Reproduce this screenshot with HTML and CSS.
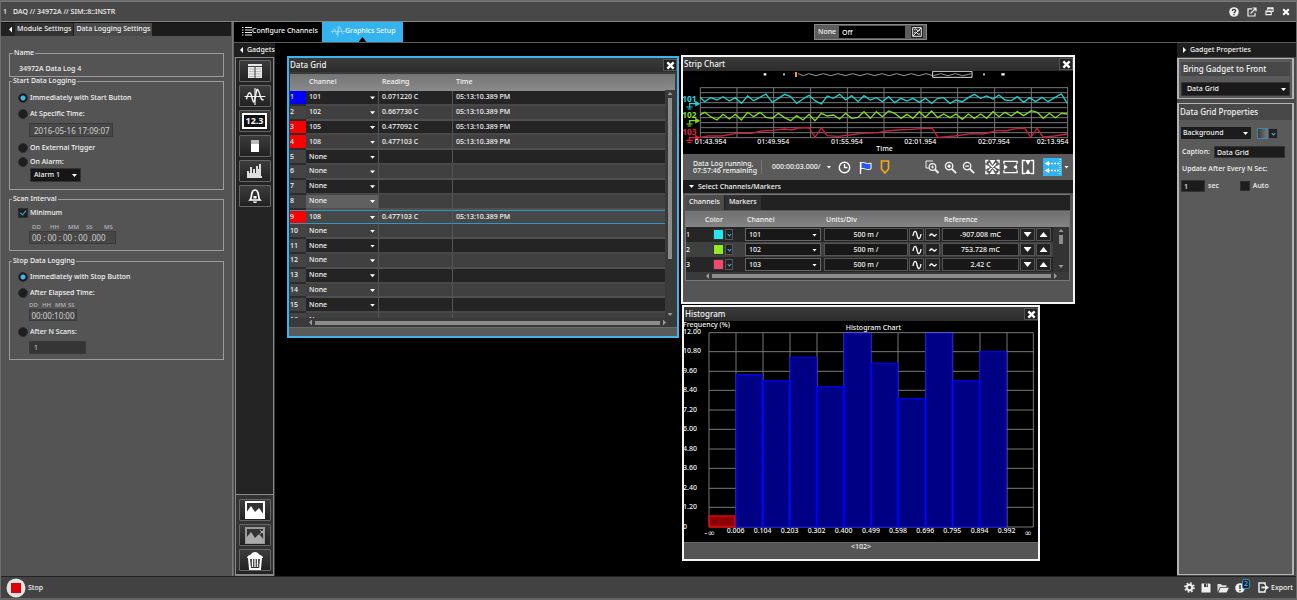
FILE: index.html
```html
<!DOCTYPE html>
<html lang="en">
<head>
<meta charset="utf-8">
<title>DAQ // 34972A</title>
<link rel="stylesheet" href="styles.css">
</head>
<body>
<svg class="defs" width="0" height="0" aria-hidden="true">
  <symbol id="i-x" viewBox="0 0 10 10"><path d="M1.5 1.5 8.5 8.5M8.5 1.5 1.5 8.5" stroke="#fff" stroke-width="2.6" fill="none"/></symbol>
  <symbol id="i-wave" viewBox="0 0 22 20"><path d="M0 10h22M11 1v18" stroke="currentColor" stroke-width="1.200" fill="none"/><path d="M2 13C4 5 6 4 7.500 10S10 19 11.500 10 13 1 15 5 17 15 20 13" stroke="currentColor" stroke-width="1.500" fill="none"/></symbol>
  <symbol id="i-mag" viewBox="0 0 14 14"><circle cx="5.500" cy="5.500" r="4" stroke="#f4f4f4" stroke-width="1.400" fill="none"/><path d="M8.500 8.500 13 13" stroke="#f4f4f4" stroke-width="2"/></symbol>
  <symbol id="i-sine" viewBox="0 0 10 10"><path d="M1 6C2 0 4 0 5 5S8 10 9 4" stroke="#fff" stroke-width="1.300" fill="none"/></symbol>
  <symbol id="i-tilde" viewBox="0 0 10 10"><path d="M1.500 6C3 3 4 4 5 5S7 7 8.500 4" stroke="#fff" stroke-width="1.300" fill="none"/></symbol>
</svg>

<div class="app">
  <header class="titlebar">
    <span>1</span>
    <h1 class="title">DAQ // 34972A // SIM::8::INSTR</h1>
    <div class="window-actions">
      <button class="plain" aria-label="Help"><svg width="10" height="10" viewBox="0 0 10 10"><circle cx="5" cy="5" r="4.800" fill="#eee"/><path d="M3.300 4C3.300 1.800 6.700 1.800 6.600 3.800 6.600 5 5 4.900 5 6.300M5 7v1.200" stroke="#333" stroke-width="1.200" fill="none"/></svg></button>
      <button class="plain" aria-label="Pop out"><svg width="10" height="10" viewBox="0 0 10 10"><path d="M5 1.800H1v7.200h7V6M3.500 6.500 8.500 1.500M5.500 1H9v3.500" stroke="#eee" stroke-width="1.200" fill="none"/></svg></button>
      <button class="plain" aria-label="Restore"><svg width="9" height="9" viewBox="0 0 10 10"><path d="M3 3.500V1h6v4H7M3 1.800h6" stroke="#eee" stroke-width="1.200" fill="none"/><path d="M1 4.500h6V8.500H1zM1 5.300h6" stroke="#eee" stroke-width="1.200" fill="none"/></svg></button>
      <button class="plain" aria-label="Close"><svg width="8" height="8"><use href="#i-x"/></svg></button>
    </div>
  </header>

  <main class="main">
    <aside class="settings">
      <nav class="side-tabs">
        <button class="side-tab back" aria-label="Collapse"><i class="tri left"></i></button>
        <button class="side-tab">Module Settings</button>
        <button class="side-tab active">Data Logging Settings</button>
      </nav>
      <form class="side-body">
        <fieldset class="group name-group">
          <legend>Name</legend>
          <input class="name-input" aria-label="Name" value="34972A Data Log 4">
        </fieldset>

        <fieldset class="group">
          <legend>Start Data Logging</legend>
          <label class="option"><input type="radio" name="start" checked>Immediately with Start Button</label>
          <label class="option gap"><input type="radio" name="start">At Specific Time:</label>
          <input class="field date" aria-label="Start time" value="2016-05-16 17:09:07">
          <label class="option gap"><input type="radio" name="start">On External Trigger</label>
          <label class="option tight"><input type="radio" name="start">On Alarm:</label>
          <span class="pick alarm"><select aria-label="Alarm"><option>Alarm 1</option></select></span>
        </fieldset>

        <fieldset class="group spaced">
          <legend>Scan Interval</legend>
          <label class="option"><input type="checkbox" checked>Minimum</label>
          <div class="units wide"><span>DD</span><span>HH</span><span>MM</span><span>SS</span><span>MS</span></div>
          <input class="field interval" aria-label="Scan interval" value="00 : 00 : 00 : 00 .000">
        </fieldset>

        <fieldset class="group stop-group">
          <legend>Stop Data Logging</legend>
          <label class="option"><input type="radio" name="stop" checked>Immediately with Stop Button</label>
          <label class="option gap"><input type="radio" name="stop">After Elapsed Time:</label>
          <div class="units narrow"><span>DD</span><span>HH</span><span>MM</span><span>SS</span></div>
          <input class="field elapsed" aria-label="Elapsed time" value="00:00:10:00">
          <label class="option gap"><input type="radio" name="stop">After N Scans:</label>
          <input class="field scans" aria-label="Number of scans" value="1">
        </fieldset>
      </form>
    </aside>

    <section class="center">
      <nav class="mode-bar">
        <button class="mode"><svg width="10" height="10" viewBox="0 0 10 10"><path d="M0 1.500h1.500M0 4h1.500M0 6.500h1.500M0 9h1.500M3 1.500h7M3 4h7M3 6.500h7M3 9h7" stroke="#eee" stroke-width="1.200"/></svg>Configure Channels</button>
        <button class="mode active"><svg class="pale" width="14" height="13"><use href="#i-wave"/></svg>Graphics Setup</button>
        <div class="status">
          <label for="off">None</label>
          <input id="off" value="Off">
          <button class="status-btn" aria-label="Picker"><svg width="10" height="10" viewBox="0 0 10 10"><path d="M.7.7h8.600v8.600H.7z" stroke="#eee" fill="none"/><path d="M1 9 9 1M2 3q2-2 3 0t3 0M2 6q2-2 3 0t3 1" stroke="#eee" fill="none"/></svg></button>
        </div>
      </nav>

      <div class="bench">
        <div class="gadgets">
          <button class="strip-head"><i class="tri left"></i>Gadgets</button>
          <div class="rail">
            <div class="rail-group">
              <button class="tool" aria-label="Data grid"><svg width="16" height="16" viewBox="0 0 16 16"><path d="M1 1h14v14H1z" fill="#e8e8e8"/><path d="M1 3.500h14" stroke="#444"/><path d="M2 6h12M2 8.500h12M2 11h12M2 13.500h12" stroke="#aaa" stroke-width=".7"/><path d="M8 4V15" stroke="#555" stroke-width="1.200"/></svg></button>
              <button class="tool" aria-label="Strip chart"><svg width="22" height="19"><use href="#i-wave"/></svg></button>
              <button class="tool" aria-label="Number"><span class="digits">12.3</span></button>
              <button class="tool" aria-label="Bar meter"><svg width="10" height="14" viewBox="0 0 10 14"><path d="M1 1h8v4H1z" fill="#bbb"/><path d="M1 5h8v8H1z" fill="#fff"/></svg></button>
              <button class="tool" aria-label="Histogram"><svg width="17" height="16" viewBox="0 0 17 16"><path d="M1 15V8h2v2h1V4h2v6h1V6h2v4h1V3h2v3h1V1h2v12h1v2z" fill="#ddd"/></svg></button>
              <button class="tool" aria-label="Alarm"><svg width="14" height="16" viewBox="0 0 14 16"><path d="M2 12C4 10 3 7 4 5 5 1 9 1 10 5 11 7 10 10 12 12z" stroke="#fff" stroke-width="1.700" fill="none"/><path d="M5 13.500a2 1.500 0 0 0 4 0z" fill="#fff"/><path d="M5.500 8h3v2.500h-3z" fill="#fff"/></svg></button>
            </div>
            <div class="rail-group bottom">
              <button class="tool" aria-label="Add image"><svg width="20" height="18" viewBox="0 0 20 18"><path d="M1 1h18v16H1z" stroke="#fff" stroke-width="2" fill="#333"/><path d="M1 17V12L6 5l4 6 4-4 5 7v3z" fill="#fff"/></svg></button>
              <button class="tool" aria-label="Remove image"><svg width="20" height="17" viewBox="0 0 20 17"><path d="M1 1h18v15H1z" stroke="#999" stroke-width="2" fill="#333"/><path d="M1 16V11L6 5l4 6 4-4 5 6v3z" fill="#aaa"/><path d="m15 3 4 4m0-4-4 4" stroke="#bbb"/></svg></button>
              <button class="tool" aria-label="Delete"><svg width="18" height="19" viewBox="0 0 18 19"><path d="M1 7C1 5 3 4 5 3.500 6 0 12 0 13 3.500 15 4 17 5 17 7z" fill="#fff"/><path d="M3 7h12l-1 11H4z" fill="#333" stroke="#fff" stroke-width="2"/><path d="M6.500 8v8M9 8v8M11.500 8v8" stroke="#fff" stroke-width="1.300"/></svg></button>
            </div>
          </div>
        </div>

        <div class="canvas">
          <section class="win grid-win">
            <header class="win-head"><h2>Data Grid</h2><button class="close" aria-label="Close Data Grid"><svg width="9" height="9"><use href="#i-x"/></svg></button></header>
            <div class="grid-body">
              <div class="grid-scroll">
                <table class="data-grid">
                  <thead><tr><th class="n"></th><th class="ch">Channel</th><th class="rd">Reading</th><th>Time</th></tr></thead>
                  <tbody>
                    <tr><td class="blue">1</td><td><span class="pick"><select aria-label="Channel 1"><option>101</option></select></span></td><td>0.071220 C</td><td>05:13:10.389 PM</td></tr>
                    <tr><td>2</td><td><span class="pick"><select aria-label="Channel 2"><option>102</option></select></span></td><td>0.667730 C</td><td>05:13:10.389 PM</td></tr>
                    <tr><td class="red">3</td><td><span class="pick"><select aria-label="Channel 3"><option>105</option></select></span></td><td>0.477092 C</td><td>05:13:10.389 PM</td></tr>
                    <tr><td class="red">4</td><td><span class="pick"><select aria-label="Channel 4"><option>108</option></select></span></td><td>0.477103 C</td><td>05:13:10.389 PM</td></tr>
                    <tr><td>5</td><td><span class="pick"><select aria-label="Channel 5"><option>None</option></select></span></td><td></td><td></td></tr>
                    <tr><td>6</td><td><span class="pick"><select aria-label="Channel 6"><option>None</option></select></span></td><td></td><td></td></tr>
                    <tr><td>7</td><td><span class="pick"><select aria-label="Channel 7"><option>None</option></select></span></td><td></td><td></td></tr>
                    <tr><td>8</td><td class="hover"><span class="pick"><select aria-label="Channel 8"><option>None</option></select></span></td><td></td><td></td></tr>
                    <tr class="selected"><td class="red">9</td><td><span class="pick"><select aria-label="Channel 9"><option>108</option></select></span></td><td>0.477103 C</td><td>05:13:10.389 PM</td></tr>
                    <tr><td>10</td><td><span class="pick"><select aria-label="Channel 10"><option>None</option></select></span></td><td></td><td></td></tr>
                    <tr><td>11</td><td><span class="pick"><select aria-label="Channel 11"><option>None</option></select></span></td><td></td><td></td></tr>
                    <tr><td>12</td><td><span class="pick"><select aria-label="Channel 12"><option>None</option></select></span></td><td></td><td></td></tr>
                    <tr><td>13</td><td><span class="pick"><select aria-label="Channel 13"><option>None</option></select></span></td><td></td><td></td></tr>
                    <tr><td>14</td><td><span class="pick"><select aria-label="Channel 14"><option>None</option></select></span></td><td></td><td></td></tr>
                    <tr><td>15</td><td><span class="pick"><select aria-label="Channel 15"><option>None</option></select></span></td><td></td><td></td></tr>
                    <tr><td>16</td><td><span class="pick"><select aria-label="Channel 16"><option>None</option></select></span></td><td></td><td></td></tr>
                  </tbody>
                </table>
              </div>
              <div class="vbar"><i class="tri up"></i><span class="thumb"></span><i class="tri down"></i></div>
            </div>
            <div class="hbar"><i class="tri left"></i><span class="thumb"></span><i class="tri right"></i></div>
            <footer class="grip"></footer>
          </section>

          <section class="win strip-win">
            <header class="win-head"><h2>Strip Chart</h2><button class="close" aria-label="Close Strip Chart"><svg width="9" height="9"><use href="#i-x"/></svg></button></header>
            <svg class="plot" viewBox="15 63 1170 249">
              <path d="M257 73h8M316 73h4M916 73h4M970 73h10" stroke="#fff" stroke-width="7"/>
              <path d="M354 66v15" stroke="#f0a020" stroke-width="6"/>
              <polyline points="360,71 376,77 392,71 414,77 436,71 458,77 480,71 502,77 524,71 546,77 568,71 590,77 612,71 634,77 656,71 678,77 700,71 722,77 744,71 766,77 788,71 810,77 832,71 854,77 880,71" stroke="#999" stroke-width="3" fill="none"/>
              <path d="M764 64h118v18H764z" fill="none" stroke="#ddd" stroke-width="3"/>
              <path d="M67 113H1170M67 128H1170M67 143H1170M67 158H1170M67 173H1170M67 188H1170M67 203H1170M67 218H1170M67 233H1170M67 248H1170M67 263H1170" stroke="#777" stroke-width="3"/>
              <path d="M67 113V263M177 113V263M287 113V263M398 113V263M508 113V263M618 113V263M729 113V263M839 113V263M950 113V263M1060 113V263M1169 113V263" stroke="#777" stroke-width="3"/>
              <g fill="none" stroke-width="4">
                <polyline stroke="#19d0d0" points="66,142 80,155 98,143 117,150 135,140 154,153 172,143 190,160 209,138 227,152 246,142 264,132 283,157 301,145 320,133 338,140 356,160 375,147 393,136 411,152 430,162 448,138 466,145 485,133 503,150 521,137 540,155 558,137 577,150 595,143 613,155 632,140 650,158 669,145 687,153 705,145 724,157 742,145 761,160 779,145 797,143 816,160 834,150 853,155 871,143 889,133 908,145 926,138 945,147 963,135 981,150 1000,152 1018,140 1037,157 1055,143 1073,155 1092,142 1110,155 1130,143 1150,132 1168,160"/>
                <polyline stroke="#80e018" points="66,195 80,187 98,200 117,210 135,193 154,207 172,193 190,210 209,187 227,200 246,187 264,202 283,205 301,190 320,203 338,212 356,197 375,210 393,193 411,212 430,190 448,198 466,195 485,207 503,190 521,205 540,202 558,185 577,205 595,185 613,200 632,183 650,190 669,205 687,193 705,205 724,185 742,202 761,183 779,203 797,192 816,203 834,192 853,208 871,192 889,205 908,192 926,205 945,185 963,200 981,187 1000,198 1018,185 1037,197 1060,182 1078,187 1096,205 1114,190 1132,203 1150,190 1168,192"/>
                <polyline stroke="#cc1e40" points="66,262 90,258 130,258 175,250 220,250 250,243 285,241 320,237 342,240 360,234 393,233 411,262 430,234 448,257 480,259 515,255 550,250 600,248 625,243 660,240 700,238 740,235 762,234 780,262 830,258 880,251 915,252 960,241 985,243 1000,238 1040,234 1058,262 1077,235 1095,261 1130,258 1168,252"/>
              </g>
              <g fill="#19d8e0" stroke="#19d8e0"><text class="ch-tag" x="13" y="156" stroke="none">101</text><path d="M33 161H58M35 161v12M25 171h19M29 177h11" fill="none" stroke-width="3.500"/><path d="M52 153 66 161 52 169z"/></g>
              <g fill="#80e018" stroke="#80e018"><text class="ch-tag" x="13" y="205" stroke="none">102</text><path d="M33 212H58M35 212v12M25 222h19M29 228h11" fill="none" stroke-width="3.500"/><path d="M52 204 66 212 52 220z"/></g>
              <g fill="#e02040" stroke="#e02040"><text class="ch-tag" x="13" y="254" stroke="none">103</text><path d="M33 263H58M35 263v8M25 271h19M29 277h11" fill="none" stroke-width="3.500"/><path d="M52 255 66 263 52 271z"/></g>
              <g class="axis">
                <text x="50" y="283">01:43.954</text><text x="238" y="283">01:49.954</text><text x="459" y="283">01:55.954</text><text x="679" y="283">02:01.954</text><text x="900" y="283">02:07.954</text><text x="1076" y="283">02:13.954</text>
                <text x="595" y="304">Time</text>
              </g>
            </svg>
            <div class="toolbar">
              <p class="log">Data Log running,<br>07:57:46 remaining</p>
              <button class="plain rate">000:00:03.000/<i class="tri down"></i></button>
              <div class="icons first">
                <button class="plain" aria-label="Time"><svg width="13" height="13" viewBox="0 0 13 13"><circle cx="6.500" cy="6.500" r="5.200" stroke="#fff" stroke-width="1.400" fill="none"/><path d="M6.500 3v3.500H9.500" stroke="#fff" stroke-width="1.300" fill="none"/></svg></button>
                <button class="plain" aria-label="Flag"><svg width="13" height="13" viewBox="0 0 13 13"><path d="M1.500 1v12" stroke="#fff" stroke-width="1.300"/><path d="M2 2c3-2 5 2 10 0v6C7 10 5 6 2 8z" fill="#2858f0" stroke="#fff"/></svg></button>
                <button class="plain" aria-label="Marker"><svg width="10" height="14" viewBox="0 0 10 14"><path d="M1.500 1h7v8L5 13 1.500 9z" stroke="#f8a818" stroke-width="1.600" fill="#555"/></svg></button>
              </div>
              <div class="icons zooms">
                <button class="plain" aria-label="Zoom area"><svg width="14" height="14" viewBox="0 0 14 14"><path d="M1 1h7M1 1v7h3" stroke="#eee" fill="none"/><circle cx="7.500" cy="7" r="3.300" stroke="#eee" stroke-width="1.200" fill="none"/><path d="m10 9.500 3.500 3.500" stroke="#eee" stroke-width="2"/><path d="M6 7h3M7.500 5.500v3" stroke="#eee"/></svg></button>
                <button class="plain" aria-label="Zoom in"><svg width="13" height="13" viewBox="0 0 14 14"><use href="#i-mag" width="14" height="14"/><path d="M3.500 5.500h4M5.500 3.500v4" stroke="#fff" stroke-width="1.300"/></svg></button>
                <button class="plain" aria-label="Zoom out"><svg width="13" height="13" viewBox="0 0 14 14"><use href="#i-mag" width="14" height="14"/><path d="M3.500 5.500h4" stroke="#fff" stroke-width="1.300"/></svg></button>
              </div>
              <div class="icons fits">
                <button class="plain" aria-label="Fit all"><svg width="15" height="16" viewBox="0 0 16 16"><path d="M3.500 1H1v3M12.500 1H15v3M3.500 15H1v-3M12.500 15H15v-3M4 4l8 8M12 4 4 12" stroke="#fff" stroke-width="1.500" fill="none"/><path d="M5 .5h6L8 5.500zM5 15.500h6L8 10.500zM.5 5v6L5.500 8zM15.500 5v6L10.500 8z" fill="#fff"/></svg></button>
                <button class="plain" aria-label="Fit width"><svg width="15" height="16" viewBox="0 0 16 16"><path d="M1 4.500V2h14v2.500M1 11.500V14h14v-2.500" stroke="#fff" stroke-width="1.400" fill="none"/><path d="M1 5v6l4-3zM15 5v6l-4-3z" fill="#fff"/></svg></button>
                <button class="plain" aria-label="Fit height"><svg width="14" height="16" viewBox="0 0 14 16"><path d="M4 1.500H1.500v13H4M10 1.500h2.500v13H10" stroke="#fff" stroke-width="1.400" fill="none"/><path d="M4 1h6L7 6zM4 15h6L7 10z" fill="#fff"/></svg></button>
              </div>
              <button class="plain roll" aria-label="Roll mode"><svg width="19" height="18" viewBox="0 0 19 18"><path d="M0 0h19v18H0z" fill="#30b4f4"/><path d="M5 5.500h11M5 12.500h11" stroke="#fff" stroke-width="1.500" stroke-dasharray="2 1"/><path d="M6 3 1.500 5.500 6 8zM6 10 1.500 12.500 6 15z" fill="#fff"/><path d="M17 1v16" stroke="#fff" stroke-dasharray="1 1"/></svg><i class="tri down"></i></button>
            </div>
            <button class="section-head"><i class="tri down"></i>Select Channels/Markers</button>
            <div class="channels">
              <nav class="tabs"><button class="tab active">Channels</button><button class="tab">Markers</button></nav>
              <div class="table-box">
                <table class="channel-table">
                  <thead><tr><th class="c-n"></th><th class="c-color">Color</th><th class="c-ch">Channel</th><th class="c-unit">Units/Div</th><th>Reference</th></tr></thead>
                  <tbody>
                    <tr>
                      <td>1</td><td><div class="cell"><button class="swatch cyan" aria-label="Color 1"></button><button class="chev" aria-label="Pick color 1"></button></div></td>
                      <td><span class="pick boxed"><select aria-label="Strip channel 1"><option>101</option></select></span></td>
                      <td><div class="cell"><input class="num" aria-label="Units 1" value="500 m /"><button class="mini" aria-label="Larger"><svg width="10" height="10"><use href="#i-sine"/></svg></button><button class="mini" aria-label="Smaller"><svg width="10" height="10"><use href="#i-tilde"/></svg></button></div></td>
                      <td><div class="cell"><input class="num" aria-label="Reference 1" value="-907.008 mC"><button class="mini" aria-label="Down"><i class="tri down big"></i></button><button class="mini" aria-label="Up"><i class="tri up big"></i></button></div></td>
                    </tr>
                    <tr>
                      <td>2</td><td><div class="cell"><button class="swatch lime" aria-label="Color 2"></button><button class="chev" aria-label="Pick color 2"></button></div></td>
                      <td><span class="pick boxed"><select aria-label="Strip channel 2"><option>102</option></select></span></td>
                      <td><div class="cell"><input class="num" aria-label="Units 2" value="500 m /"><button class="mini" aria-label="Larger"><svg width="10" height="10"><use href="#i-sine"/></svg></button><button class="mini" aria-label="Smaller"><svg width="10" height="10"><use href="#i-tilde"/></svg></button></div></td>
                      <td><div class="cell"><input class="num" aria-label="Reference 2" value="753.728 mC"><button class="mini" aria-label="Down"><i class="tri down big"></i></button><button class="mini" aria-label="Up"><i class="tri up big"></i></button></div></td>
                    </tr>
                    <tr>
                      <td>3</td><td><div class="cell"><button class="swatch rose" aria-label="Color 3"></button><button class="chev" aria-label="Pick color 3"></button></div></td>
                      <td><span class="pick boxed"><select aria-label="Strip channel 3"><option>103</option></select></span></td>
                      <td><div class="cell"><input class="num" aria-label="Units 3" value="500 m /"><button class="mini" aria-label="Larger"><svg width="10" height="10"><use href="#i-sine"/></svg></button><button class="mini" aria-label="Smaller"><svg width="10" height="10"><use href="#i-tilde"/></svg></button></div></td>
                      <td><div class="cell"><input class="num" aria-label="Reference 3" value="2.42 C"><button class="mini" aria-label="Down"><i class="tri down big"></i></button><button class="mini" aria-label="Up"><i class="tri up big"></i></button></div></td>
                    </tr>
                  </tbody>
                </table>
                <div class="vbar short"><i class="tri up"></i><span class="thumb"></span><i class="tri down"></i></div>
                <div class="hbar"><i class="tri left"></i><span class="thumb"></span><i class="tri right"></i></div>
              </div>
            </div>
          </section>

          <section class="win hist-win">
            <header class="win-head"><h2>Histogram</h2><button class="close" aria-label="Close Histogram"><svg width="9" height="9"><use href="#i-x"/></svg></button></header>
            <svg class="plot" viewBox="18 63 1062 663">
              <path d="M93 98H1066M93 155H1066M93 214H1066M93 271H1066M93 330H1066M93 388H1066M93 447H1066M93 505H1066M93 565H1066M93 622H1066M93 681H1066" stroke="#777" stroke-width="3"/>
              <path d="M93 98V681M174 98V681M255 98V681M336 98V681M417 98V681M498 98V681M579 98V681M660 98V681M743 98V681M824 98V681M906 98V681M987 98V681M1066 98V681" stroke="#777" stroke-width="3"/>
              <path d="M94 648h77v32H94z" fill="#8c0008" stroke="#e60000" stroke-width="5"/>
              <g fill="#000084" stroke="#0000f0" stroke-width="4">
                <path d="M175 224h77v456h-77z"/><path d="M256 242h77v438h-77z"/><path d="M337 172h78v508h-78z"/><path d="M418 260h78v420h-78z"/><path d="M499 101h79v579h-79z"/><path d="M580 190h79v490h-79z"/><path d="M662 296h79v384h-79z"/><path d="M744 101h78v579h-78z"/><path d="M825 242h79v438h-79z"/><path d="M906 155h78v525h-78z"/>
              </g>
              <g class="axis">
                <text x="15" y="80">Frequency (%)</text><text x="503" y="89">Histogram Chart</text>
                <text x="15" y="102">12.00</text><text x="15" y="160">10.80</text><text x="15" y="219">9.60</text><text x="15" y="277">8.40</text><text x="15" y="335">7.20</text><text x="15" y="393">6.00</text><text x="15" y="452">4.80</text><text x="15" y="511">3.60</text><text x="15" y="569">2.40</text><text x="15" y="628">1.20</text><text x="15" y="687">0</text>
                <text class="inf" x="79" y="708">-∞</text><text x="146" y="700">0.006</text><text x="227" y="700">0.104</text><text x="308" y="700">0.203</text><text x="389" y="700">0.302</text><text x="470" y="700">0.400</text><text x="552" y="700">0.499</text><text x="633" y="700">0.598</text><text x="715" y="700">0.696</text><text x="796" y="700">0.795</text><text x="878" y="700">0.894</text><text x="959" y="700">0.992</text><text class="inf" x="1039" y="708">∞</text>
              </g>
            </svg>
            <footer class="hist-foot">&lt;102&gt;</footer>
          </section>
        </div>

        <aside class="props">
          <button class="strip-head"><i class="tri right"></i>Gadget Properties</button>
          <section class="card">
            <h2>Bring Gadget to Front</h2>
            <span class="pick front"><select aria-label="Bring gadget to front"><option>Data Grid</option></select></span>
          </section>
          <section class="card grow">
            <h2 class="flush">Data Grid Properties</h2>
            <div class="line"><span class="pick back-pick"><select aria-label="Property"><option>Background</option></select></span><button class="swatch dark" aria-label="Background color"></button><button class="chev tall" aria-label="Pick background color"></button></div>
            <div class="line"><label class="cap" for="cap">Caption:</label><input class="dark-input" id="cap" value="Data Grid"></div>
            <label class="update" for="sec">Update After Every N Sec:</label>
            <div class="line last"><input class="dark-input sec" id="sec" value="1"><label for="sec">sec</label><label class="auto"><input type="checkbox">Auto</label></div>
          </section>
        </aside>
      </div>
    </section>
  </main>

  <footer class="footer">
    <button class="plain stop"><svg width="20" height="20" viewBox="0 0 20 20"><circle cx="10" cy="10" r="9.500" fill="#e4e4e4"/><path d="M5 5h10v10H5z" fill="#e00008"/></svg>Stop</button>
    <div class="foot-actions">
      <button class="plain" aria-label="Settings"><svg width="11" height="11" viewBox="0 0 11 11"><circle cx="5.500" cy="5.500" r="4.400" fill="none" stroke="#eee" stroke-width="1.800" stroke-dasharray="1.700 1.756"/><circle cx="5.500" cy="5.500" r="2.700" fill="none" stroke="#eee" stroke-width="2"/></svg></button>
      <button class="plain" aria-label="Save"><svg width="10" height="10" viewBox="0 0 10 10"><path d="M.5.5h8l1 1v8h-9z" fill="#eee"/><path d="M3 .5h4v3.500H3z" fill="#444"/><path d="M5.300 1h1v2.300h-1z" fill="#eee"/></svg></button>
      <button class="plain" aria-label="Open"><svg width="12" height="10" viewBox="0 0 12 10"><path d="M.5 9V1H4l1 1.200h4.500V4H3z" fill="#ddd"/><path d="M3.500 4.700H12L9.500 9.500h-8z" fill="#eee"/></svg></button>
      <button class="plain alerts" aria-label="Alerts"><svg width="10" height="10" viewBox="0 0 10 10"><circle cx="5" cy="5" r="4.800" fill="#eee"/><path d="M5 2v4M5 7v1.300" stroke="#444" stroke-width="1.500"/></svg><span class="badge">2</span></button>
      <button class="plain export"><svg width="11" height="11" viewBox="0 0 11 11"><path d="M7 3V1H1v9h6V8" stroke="#eee" stroke-width="1.500" fill="none"/><path d="M3.500 5.500H8" stroke="#eee" stroke-width="1.800"/><path d="M7 2.500 11 5.500 7 8.500z" fill="#eee"/></svg>Export</button>
    </div>
  </footer>
</div>
</body>
</html>
```

FILE: styles.css
```css
* { box-sizing: border-box; }

body {
  margin: 0;
  background: #000;
  color: #f4f4f4;
  font: 500 7px/10px "Noto Sans", "Open Sans", sans-serif;
}

button, input, select { font: inherit; color: inherit; margin: 0; border-radius: 0; }
button { padding: 0; border: 0; background: none; white-space: nowrap; }
input { min-width: 0; border: 0; background: none; padding: 0; outline: 0; }
svg { display: block; flex: none; }
h1, h2, p { margin: 0; font-size: 8px; font-weight: 500; }
.defs { position: absolute; }
.plain { display: flex; align-items: center; }

/* small triangles */
.tri { flex: none; display: block; width: 5px; height: 3px; background: #fff; }
.tri.down { clip-path: polygon(0 0, 100% 0, 50% 100%); }
.tri.up { clip-path: polygon(0 100%, 100% 100%, 50% 0); }
.tri.left { width: 3px; height: 6px; clip-path: polygon(100% 0, 100% 100%, 0 50%); }
.tri.right { width: 3px; height: 6px; clip-path: polygon(0 0, 0 100%, 100% 50%); }
.tri.big { width: 8px; height: 5px; }

.app {
  min-height: 100vh;
  display: flex;
  flex-direction: column;
  border: 1px solid #6c6c6c;
  border-bottom: 2px solid #666;
}

.titlebar {
  display: flex;
  align-items: center;
  gap: 6px;
  height: 21px;
  padding: 0 6px 0 2px;
  background: #484848;
  border-top: 1px solid #777;
  border-bottom: 1px solid #858585;
}
.title { font-size: 7px; }
.window-actions { display: flex; align-items: center; gap: 8px; margin-left: auto; }

.main { flex: 1; display: flex; background: #555; }

/* left settings */
.settings { width: 232px; flex: none; border-right: 1px solid #7a7a7a; background: #545454; }
.side-tabs { display: flex; height: 14px; margin-right: 1px; background: #1c1c1c; border-top: 1px solid #111; }
.side-tab { padding: 0 2px 2px; background: #333; }
.side-tab.back { padding: 0 3px 0 8px; background: #222; }
.side-tab.active { margin-left: 1px; background: #4a4a4a; }
.side-body { padding: 13px 8px 0 8px; }

.group {
  display: flex;
  flex-direction: column;
  align-items: flex-start;
  min-width: 0;
  margin: 0;
  padding: 7px 8px;
  border: 1px solid #9c9c9c;
}
.group legend { margin-left: -6px; padding: 0 1px; line-height: 8px; }
.group.name-group { padding: 7px 9px 2px; }
.group.spaced { margin-top: 5px; padding-top: 4px; padding-bottom: 6px; }
.group.stop-group { margin-top: 6px; padding-top: 6px; padding-bottom: 5px; }
.name-input { width: 100%; height: 10px; }

.option { display: flex; align-items: center; gap: 2px; height: 12px; white-space: nowrap; }
.option.gap { margin-top: 4px; }
.option.tight { margin-top: 2px; }
input[type="radio"], input[type="checkbox"] {
  appearance: none;
  flex: none;
  width: 10px;
  height: 10px;
  border: 1px solid #2e2e2e;
  background: #1e1e1e;
}
input[type="radio"] { border-radius: 50%; }
input[type="radio"]:checked { background: radial-gradient(circle, #38b8f4 0 2px, #161616 3px); }
input[type="checkbox"]:checked::before {
  content: "";
  display: block;
  width: 5px;
  height: 3px;
  margin: 1px;
  border: solid #38b0ec;
  border-width: 0 0 1px 1px;
  transform: rotate(-50deg);
}

.field { height: 13px; margin-left: 11px; border: 1px solid #3a3a3a; background: #474747; color: #d0d0d0; font-size: 8px; font-weight: 400; }
.date { width: 84px; height: 14px; margin-top: 3px; margin-bottom: 1px; padding-left: 4px; }
.interval { width: 87px; padding-left: 2px; }
.elapsed { width: 48px; height: 12px; text-align: center; }
.scans { width: 57px; margin-top: 3px; padding-left: 4px; background: #353535; font-size: 7px; }
.units { display: flex; margin-left: 11px; line-height: 8px; color: #b8b8b8; font-size: 6px; }
.units.wide { gap: 8px; padding-left: 3px; margin-top: 4px; }
.units.wide span { width: 10px; }
.units.narrow { gap: 3px; margin-top: 2px; }
.units.narrow span { width: 10px; }
.elapsed + .gap { margin-top: 5px; }

/* drop-downs */
.pick { display: block; position: relative; }
.pick select {
  appearance: none;
  display: block;
  width: 100%;
  height: 12px;
  padding: 0 9px 0 3px;
  border: 0;
  background: none;
  line-height: 10px;
}
.pick::after {
  content: "";
  position: absolute;
  right: 3px;
  top: 50%;
  width: 5px;
  height: 3px;
  margin-top: -1px;
  background: #fff;
  clip-path: polygon(0 0, 100% 0, 50% 100%);
  pointer-events: none;
}
.alarm { width: 51px; margin-left: 12px; border: 1px solid #333; background: #161616; }

/* centre */
.center { flex: 1; min-width: 0; display: flex; flex-direction: column; background: #000; border-left: 1px solid #666; }
.mode-bar { display: flex; position: relative; height: 21px; border-bottom: 1px solid #5c5c5c; }
.mode { display: flex; align-items: center; width: 88px; padding-left: 8px; padding-bottom: 2px; }
.mode.active { position: relative; width: 81px; padding-left: 9px; background: #34b4ee; }
.mode.active::after {
  content: "";
  position: absolute;
  left: 50%;
  bottom: 0;
  width: 8px;
  height: 5px;
  margin-left: -4px;
  background: #000;
  clip-path: polygon(50% 0, 100% 100%, 0 100%);
}
.pale { color: #9fdcf8; }
.status { display: flex; align-items: center; width: 113px; height: 16px; margin: 2px 0 0 411px; padding: 0 3px; border: 1px solid #888; background: #5c5c5c; }
.status label { width: 21px; }
.status input { width: 66px; height: 12px; padding-left: 3px; background: #000; }
.status-btn { margin-left: auto; border: 1px solid #222; background: #222; }

.bench { flex: 1; display: flex; min-height: 0; }
.gadgets { width: 41px; flex: none; display: flex; flex-direction: column; background: #3a3a3a; }
.strip-head { display: flex; align-items: center; gap: 4px; height: 14px; padding-left: 6px; background: #1e1e1e; flex: none; }
.rail { flex: 1; display: flex; flex-direction: column; justify-content: space-between; margin: 0 1px; padding-bottom: 3px; border: 1px solid #888; border-bottom-width: 2px; background: #242424; }
.rail-group { display: flex; flex-direction: column; align-items: center; gap: 3px; padding: 2px 0; }
.rail-group.bottom { padding: 4px 0 0; border-top: 1px solid #888; background: #333; }
.tool { display: flex; align-items: center; justify-content: center; width: 32px; height: 22px; border: 1px solid #666; border-radius: 1px; background: linear-gradient(#3c3c3c, #222); }
.digits { width: 25px; border: 2px solid #fff; background: #111; font-size: 9px; line-height: 12px; font-weight: 700; text-align: center; }

/* gadget windows */
.canvas { flex: 1; position: relative; min-width: 0; background: #000; }
.win { position: absolute; display: flex; flex-direction: column; border: 2px solid #f4f4f4; background: #555; overflow: hidden; }
.win-head { display: flex; align-items: center; justify-content: space-between; height: 14px; padding: 0 0 0 1px; background: linear-gradient(#3a3a3a, #2c2c2c); flex: none; }
.close { display: flex; align-items: center; justify-content: center; width: 14px; height: 12px; border: 1px solid #555; background: #222; }
.plot { width: 100%; background: #000; overflow: hidden; }
.axis { fill: #f4f4f4; font-size: 21px; }
.axis .inf { font-family: "DejaVu Sans", sans-serif; font-size: 27px; }
.ch-tag { font-size: 25px; font-weight: 700; }

.grid-win { left: 12px; top: 13px; width: 392px; border-color: #3cb4ee; background: #3a3a3a; }
.grid-body { display: flex; margin: 2px 2px 0 1px; height: 244px; }
.grid-scroll { flex: 1; overflow: hidden; }
.data-grid { width: 377px; height: 254px; border-collapse: separate; border-spacing: 0; table-layout: fixed; }
.data-grid th { height: 17px; padding: 0 3px 1px; text-align: left; font-weight: 500; background: linear-gradient(#747474, #8a8a8a); }
.data-grid .n { width: 16px; }
.data-grid .ch { width: 73px; }
.data-grid .rd { width: 74px; }
.data-grid td { padding: 0 0 0 3px; background: #242424; border-right: 1px solid #555; border-bottom: 2px solid #484848; line-height: 10px; }
.data-grid tr:nth-child(even) td { background: #404040; border-bottom-color: #505050; }
.data-grid tr td:first-child { padding-left: 0; background: #444; border-right: 0; border-bottom-color: #2c2c2c; }
.data-grid tr td.blue { background: #0000fa; }
.data-grid tr td.red { background: #fa0000; }
.data-grid td:nth-child(2) { padding: 0; }
.data-grid tr td.hover { background: #606060; }
.data-grid tr.selected td { background: #484848; border-top: 1px solid #2c98c4; border-bottom: 1px solid #2c98c4; }
.data-grid tr.selected td.red { background: #fa0000; }

.vbar { display: flex; flex-direction: column; align-items: center; width: 10px; padding: 18px 0 2px; background: linear-gradient(#747474, #8a8a8a 16px, #3a3a3a 16px); }
.vbar .thumb { width: 4px; height: 161px; margin-top: 3px; background: #8c8c8c; }
.vbar .tri, .hbar .tri { background: #999; }
.vbar .tri.down { margin-top: auto; }
.hbar { display: flex; align-items: center; gap: 3px; height: 9px; padding: 0 11px 0 20px; }
.hbar .thumb { flex: 1; height: 4px; background: #8c8c8c; }
.grip { height: 9px; background: #5a5a5a; border-top: 1px solid #6a6a6a; }

.strip-win { left: 406px; top: 12px; width: 394px; height: 249px; }
.toolbar { display: flex; align-items: center; height: 26px; flex: none; padding-left: 10px; background: #5a5a5a; }
.log { width: 69px; font-size: 7px; line-height: 7px; border-right: 1px solid #777; }
.rate { gap: 6px; margin-left: 10px; }
.icons { display: flex; align-items: center; }
.icons.first { gap: 8px; margin-left: 7px; }
.icons.zooms { gap: 5px; margin-left: 35px; }
.icons.fits { gap: 3px; margin-left: 10px; }
.roll { gap: 2px; margin-left: auto; padding-right: 4px; }
.section-head { display: flex; align-items: center; gap: 4px; height: 13px; padding-left: 6px; background: #1c1c1c; flex: none; }
.channels { margin: 1px 3px 0 2px; }
.tabs { display: flex; gap: 1px; height: 16px; border-top: 1px solid #777; background: #222; }
.tab { padding: 0 4px 1px; background: #303030; }
.tab.active { background: #4c4c4c; }
.table-box { display: grid; grid-template-columns: 1fr 16px; margin-top: 1px; border: 1px solid #777; background: #3a3a3a; }
.channel-table { width: 100%; border-collapse: collapse; table-layout: fixed; background: #262626; }
.channel-table th { height: 15px; padding: 0 2px; text-align: left; font-weight: 500; background: linear-gradient(#707070, #858585); }
.channel-table td { height: 15px; padding: 0; }
.channel-table tbody tr:nth-child(even) td { background: #404040; }
.channel-table .c-n { width: 17px; }
.channel-table .c-color { width: 42px; }
.channel-table .c-ch { width: 79px; }
.channel-table .c-unit { width: 118px; }
.cell { display: flex; align-items: center; gap: 1px; padding-right: 2px; }
.swatch { width: 11px; height: 11px; margin-left: 10px; border: 1px solid #333; }
.cyan { background: #28e4ec; }
.lime { background: #90ec20; }
.rose { background: #f44868; }
.dark { margin-left: 6px; border-color: #3c86a8; background: linear-gradient(90deg, #3c3c3c, #777); }
.chev { display: flex; align-items: center; justify-content: center; width: 8px; height: 11px; border: 1px solid #555; background: #222; }
.chev::before { content: ""; box-sizing: content-box; width: 2px; height: 2px; border: solid #48b8f0; border-width: 0 1px 1px 0; transform: rotate(45deg); }
.boxed { margin-right: 3px; border: 1px solid #666; background: #181818; }
.boxed select { height: 11px; }
.num { flex: 1; height: 13px; border: 1px solid #555; background: #181818; text-align: center; }
.mini { display: flex; align-items: center; justify-content: center; width: 15px; height: 13px; border: 1px solid #555; background: #222; }
.vbar.short { width: 16px; padding: 17px 0 4px; background: linear-gradient(#707070, #858585 15px, #333 15px); }
.vbar.short .thumb { height: 9px; }
.table-box .hbar { grid-column: 1 / 3; height: 8px; padding: 0 12px 0 20px; }

.hist-win { left: 407px; top: 262px; width: 358px; }
.hist-foot { height: 17px; background: #555; border-top: 1px solid #666; text-align: center; line-height: 8px; }

/* right properties */
.props { width: 119px; flex: none; display: flex; flex-direction: column; background: #4a4a4a; }
.card { margin: 1px 2px 0 0; padding: 3px 2px 2px; border: 2px solid #b4b4b4; border-width: 1px 2px; background: #5a5a5a; }
.card.grow { flex: 1; margin-top: 4px; margin-bottom: 1px; padding-top: 0; }
.card h2 { height: 14px; padding-left: 2px; line-height: 13px; background: #484848; }
.card h2.flush { margin: 0 -2px; padding-left: 1px; line-height: 16px; height: 16px; }
.front { margin-top: 6px; border: 1px solid #333; background: #1a1a1a; }
.front select { padding-left: 5px; }
.line { display: flex; align-items: center; margin-top: 7px; }
.back-pick { width: 70px; background: #1c1c1c; }
.back-pick select { padding-left: 2px; }
.chev.tall { width: 10px; }
.cap { width: 33px; padding-left: 1px; }
.dark-input { width: 71px; height: 12px; padding-left: 2px; border: 1px solid #333; background: #1c1c1c; }
.update { display: block; margin-top: 6px; padding-left: 1px; }
.dark-input.sec { width: 24px; margin-right: 3px; }
.line.last { margin-top: 6px; }
.auto { display: flex; align-items: center; gap: 3px; margin-left: 21px; }

.footer { display: flex; align-items: center; justify-content: space-between; height: 22px; padding: 0 3px 0 5px; background: #424242; border-top: 1px solid #222; }
.stop { gap: 2px; }
.foot-actions { display: flex; align-items: center; gap: 6px; }
.alerts { position: relative; margin-right: 7px; }
.badge { position: absolute; left: 7px; top: -4px; width: 8px; height: 10px; border: 1px solid #3090c0; border-radius: 2px; background: #223; line-height: 8px; color: #48b8f0; text-align: center; }
.export { gap: 2px; }
```
